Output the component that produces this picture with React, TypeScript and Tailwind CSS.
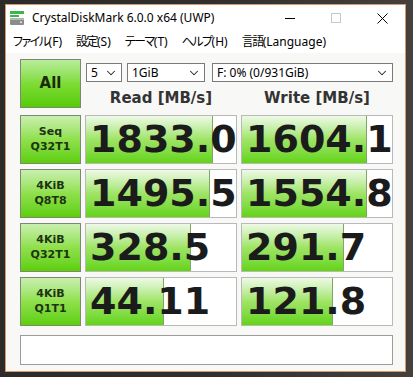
import { ChevronDown } from 'lucide-react'

type Row = {
  name: string
  sub: string
  read: string
  write: string
  readFill: number
  writeFill: number
}

const rows: Row[] = [
  { name: 'Seq', sub: 'Q32T1', read: '1833.0', write: '1604.1', readFill: 127, writeFill: 125 },
  { name: '4KiB', sub: 'Q8T8', read: '1495.5', write: '1554.8', readFill: 124, writeFill: 125 },
  { name: '4KiB', sub: 'Q32T1', read: '328.5', write: '291.7', readFill: 105, writeFill: 102 },
  { name: '4KiB', sub: 'Q1T1', read: '44.11', write: '121.8', readFill: 78, writeFill: 91 },
]

const menu = [
  { jp: 'ファイル', key: '(F)' },
  { jp: '設定', key: '(S)' },
  { jp: 'テーマ', key: '(T)' },
  { jp: 'ヘルプ', key: '(H)' },
  { jp: '言語', key: '(Language)' },
]

const uiFont = "font-['Noto_Sans','Noto_Sans_CJK_JP',sans-serif]"
const boldFont = "font-['DejaVu_Sans',sans-serif] font-bold"

function DiskIcon() {
  return (
    <svg width="16" height="16" viewBox="0 0 16 16">
      <rect x="1" y="1" width="14" height="3" fill="#3cb84a" />
      <rect x="1" y="5" width="9" height="2" fill="#3cb84a" />
      <rect x="1" y="8" width="14" height="7" rx="1" fill="#8c8c8c" />
      <rect x="1" y="8" width="14" height="2" fill="#b5b5b5" />
      <rect x="11" y="11.5" width="2" height="1.5" fill="#e8e8e8" />
    </svg>
  )
}

function Select({ label, width }: { label: string; width: string }) {
  return (
    <div
      className={`${width} h-[19px] flex items-center justify-between border border-[#7a7a7a] bg-white pl-[4px] pr-[3px] text-[12px] text-black ${uiFont}`}
    >
      <span>{label}</span>
      <ChevronDown size={14} strokeWidth={1.75} className="text-[#222]" />
    </div>
  )
}

function ResultBox({ value, fill }: { value: string; fill: number }) {
  return (
    <div className="relative h-[49px] overflow-hidden border border-[#b9b9b9] bg-white">
      <div
        className="absolute left-0 top-0 bottom-0 border-r border-[#7fa866] bg-gradient-to-b from-[#eef9e6] via-[#9fe465] to-[#62d40a]"
        style={{ width: fill }}
      />
      <div
        className={`relative flex h-full items-center pl-[4px] text-[38px] leading-none text-[#1b1b1b] ${boldFont}`}
      >
        {value}
      </div>
    </div>
  )
}

export default function App() {
  return (
    <div className="h-[377px] w-[413px] overflow-hidden bg-gradient-to-r from-[#2c2b2a] via-[#302f2e] to-[#45403b] pl-[5px] pt-[4px]">
      <div className="flex h-[368px] w-[401px] flex-col border border-[#d8996a] bg-[#f8f8f7]">
        {/* Title bar */}
        <div className={`flex h-[26px] items-center bg-white pl-[3px] text-[12px] text-black ${uiFont}`}>
          <DiskIcon />
          <span className="ml-[7px]">CrystalDiskMark 6.0.0 x64 (UWP)</span>
          <div className="ml-auto flex h-full items-center">
            <div className="flex w-[46px] justify-center">
              <div className="h-px w-[10px] bg-black" />
            </div>
            <div className="flex w-[46px] justify-center">
              <div className="h-[10px] w-[10px] border border-[#c8c8c8]" />
            </div>
            <div className="flex w-[46px] justify-center">
              <svg width="11" height="11" viewBox="0 0 11 11">
                <path d="M0.5 0.5 L10.5 10.5 M10.5 0.5 L0.5 10.5" stroke="#000" strokeWidth="1" />
              </svg>
            </div>
          </div>
        </div>

        {/* Menu bar */}
        <div
          className={`flex h-[22px] items-center gap-[14px] bg-white pl-[7px] text-[12px] text-black [font-feature-settings:'palt'] ${uiFont}`}
        >
          {menu.map((m) => (
            <span key={m.key}>
              <span className="tracking-[-1.5px]">{m.jp}</span>
              {m.key}
            </span>
          ))}
        </div>

        {/* Main */}
        <div className="flex flex-1 flex-col pl-[14px] pt-[6px]">
          <div className="grid grid-cols-[61px_152px_152px] gap-x-[4px] gap-y-[5px]">
            <div
              className={`flex h-[49px] items-center justify-center border border-[#7d8776] bg-gradient-to-b from-[#b9ec98] via-[#7edc33] to-[#55cc00] text-[15px] text-[#1a2a0a] ${boldFont}`}
            >
              All
            </div>
            <div className="col-span-2 flex flex-col">
              <div className="mt-[4px] flex items-center">
                <div className="ml-[1px]">
                  <Select label="5" width="w-[36px]" />
                </div>
                <div className="ml-[5px]">
                  <Select label="1GiB" width="w-[78px]" />
                </div>
                <div className="ml-[7px]">
                  <Select label="F: 0% (0/931GiB)" width="w-[181px]" />
                </div>
              </div>
              <div className={`mt-[5px] grid grid-cols-2 gap-x-[4px] text-center text-[15px] text-[#333] ${boldFont}`}>
                <span>Read [MB/s]</span>
                <span>Write [MB/s]</span>
              </div>
            </div>

            {rows.map((r, i) => (
              <div key={i} className="contents">
                <div
                  className={`flex h-[49px] flex-col items-center justify-center border border-[#7d8776] bg-gradient-to-b from-[#c9efad] via-[#8fe04a] to-[#5ccf00] text-[11px] leading-[15px] text-[#1f3312] ${boldFont}`}
                >
                  <span>{r.name}</span>
                  <span>{r.sub}</span>
                </div>
                <ResultBox value={r.read} fill={r.readFill} />
                <ResultBox value={r.write} fill={r.writeFill} />
              </div>
            ))}
          </div>

          <div className="mt-[9px] h-[30px] w-[373px] border border-[#9c9c9c] bg-white" />
        </div>
      </div>
    </div>
  )
}
